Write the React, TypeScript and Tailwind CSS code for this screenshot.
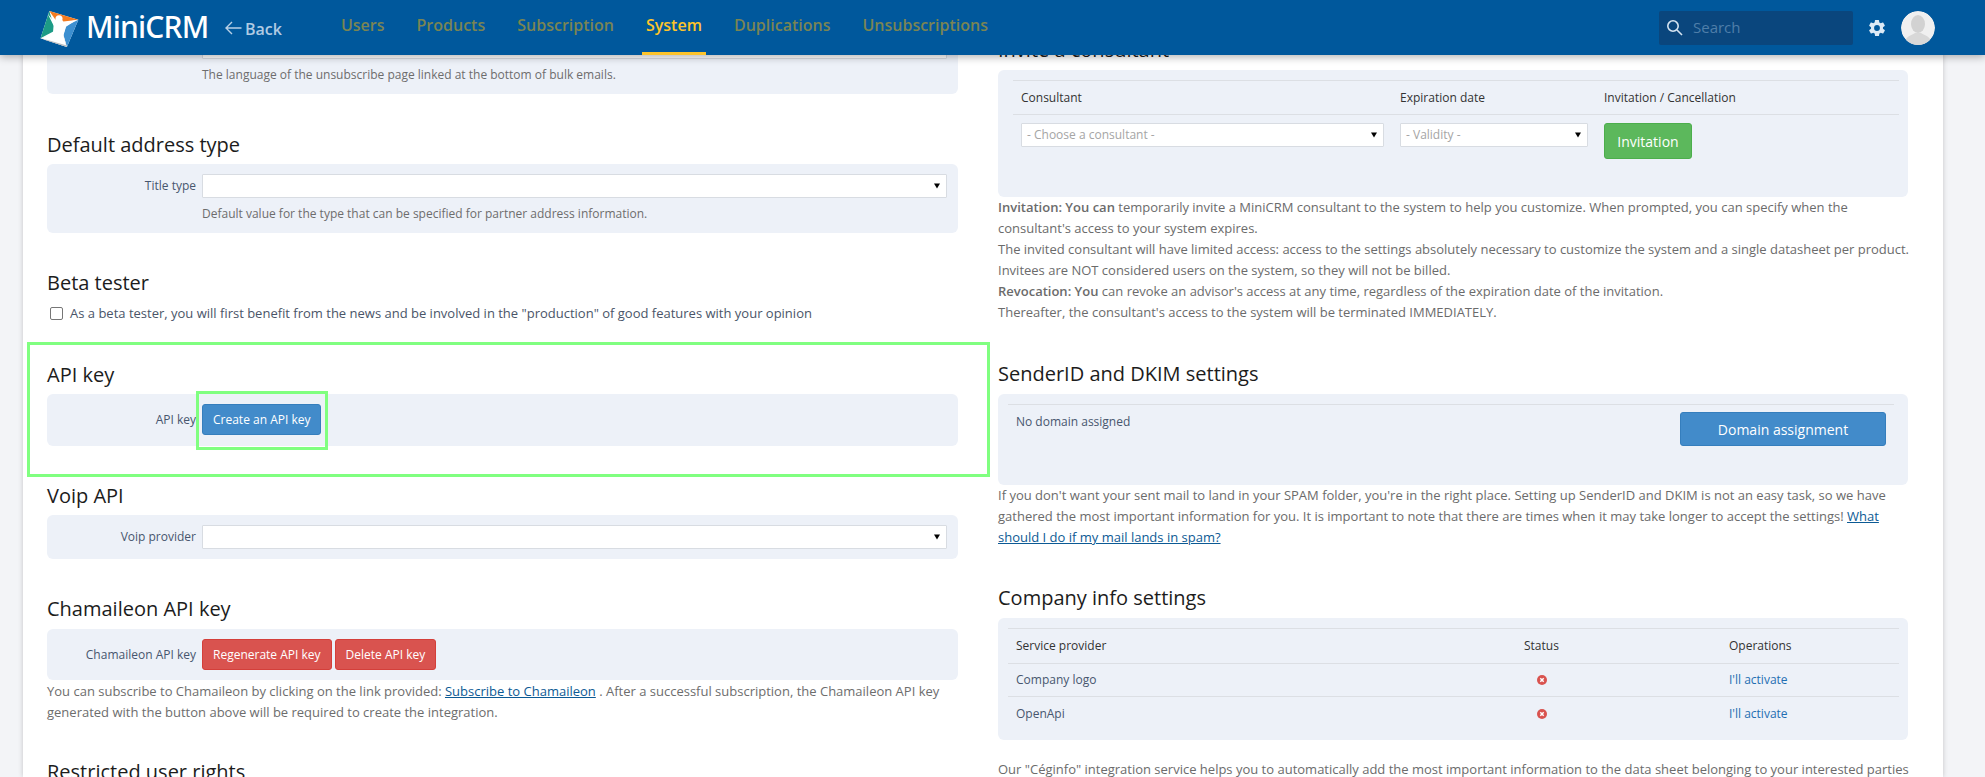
import React from "react";

function Logo() {
  return (
    <svg width="44" height="43" viewBox="0 0 50 46" className="shrink-0">
      <polygon points="14,3 47,13 34,44 4,34" fill="#ffffff" />
      <polygon points="14,3 47,13 30,15 25,9 21,13" fill="#f47b20" />
      <polygon points="47,13 34,44 30,30 33,20" fill="#3c8fd0" />
      <polygon points="14,3 4,34 19,26 19,20" fill="#1d9b86" />
      <polygon points="4,34 34,44 30,31 18,30" fill="#d4d6d8" />
      <polygon points="9,36 34,44 30,34 22,30" fill="#b9bcbf" />
      <circle cx="25" cy="12" r="4" fill="#ffffff" />
      <path d="M12 6 L21 17 L30 17 L45 13 L33 21 L30 31 L33 42 L5 34 L18 29 L19 20 Z" fill="#ffffff" />
    </svg>
  );
}

function Caret() {
  return <span className="absolute right-[6px] top-1/2 -translate-y-1/2 w-0 h-0 border-x-[3.5px] border-x-transparent border-t-[5px] border-t-black" />;
}

function Select({ text, className = "" }: { text?: string; className?: string }) {
  return (
    <div className={"relative h-6 bg-white border border-[#d8dce2] rounded-[1px] pl-[5px] text-[12px] leading-[22px] text-[#a5a5a5] " + className}>
      {text}
      <Caret />
    </div>
  );
}

function Heading({ children }: { children: React.ReactNode }) {
  return <h2 className="h-7 text-[20px] leading-7 text-[#1c1c1c] font-normal whitespace-nowrap">{children}</h2>;
}

function Row({ label, children }: { label?: string; children: React.ReactNode }) {
  return (
    <div className="flex items-center">
      <div className="w-[155px] pr-[6px] text-right text-[12px] text-[#47566e] leading-[18px] whitespace-nowrap">{label}</div>
      <div className="flex-1 flex gap-[3px]">{children}</div>
    </div>
  );
}

function Help({ children }: { children: React.ReactNode }) {
  return <p className="ml-[155px] mt-[5px] text-[12px] leading-[21px] text-[#6d6d6d]">{children}</p>;
}

function Btn({ color, children }: { color: "blue" | "red"; children: React.ReactNode }) {
  return (
    <button
      className={
        "h-[31px] rounded-[3px] text-white text-[12px] border whitespace-nowrap " +
        (color === "blue" ? "bg-[#428bca] border-[#357ebd] px-[10px]" : "bg-[#d9534f] border-[#d43f3a] px-[10px]")
      }
    >
      {children}
    </button>
  );
}

function Panel({ className = "", children }: { className?: string; children: React.ReactNode }) {
  return <div className={"bg-[#edf1f8] rounded-[6px] " + className}>{children}</div>;
}

const Text = ({ children, className = "" }: { children: React.ReactNode; className?: string }) => (
  <p className={"text-[13px] leading-[21px] text-[#6b6b6b] " + className}>{children}</p>
);

const A = ({ children }: { children: React.ReactNode }) => (
  <a className="text-[#0c5a94] underline">{children}</a>
);

const tabs = ["Users", "Products", "Subscription", "System", "Duplications", "Unsubscriptions"];

export default function App() {
  return (
    <div className="relative h-[777px] w-[1985px] overflow-hidden bg-[#f3f4f7] font-['Open_Sans',sans-serif]">
      <header className="absolute inset-x-0 top-0 z-20 h-[55px] bg-[#00589c] shadow-[0_2px_8px_rgba(0,0,0,0.3)] flex items-center">
        <div className="ml-[37px] mt-[2px]">
          <Logo />
        </div>
        <span className="ml-[5px] -mt-[2px] text-[30px] leading-none text-white font-medium font-['Noto_Sans',sans-serif] tracking-[-0.8px] w-[120px]">MiniCRM</span>
        <svg width="17" height="14" viewBox="0 0 17 14" fill="none" stroke="#b8d0e6" strokeWidth="1.4" className="ml-[19px] mt-[1px]">
          <path d="M16.5 7H1M7 1 1 7l6 6" />
        </svg>
        <span className="ml-[3px] mt-[2px] text-[16px] font-semibold text-[#b0cbe3]">Back</span>
        <nav className="ml-[59px] flex h-full gap-[32px] w-[680px]">
          {tabs.map((t) => (
            <div key={t} className="relative h-full flex items-center pb-[5px]">
              <span className={"text-[16px] font-semibold whitespace-nowrap " + (t === "System" ? "text-[#fdc42b]" : "text-[#7a8553]")}>{t}</span>
              {t === "System" && <span className="absolute -inset-x-[4px] bottom-0 h-[3px] bg-[#fdc42b]" />}
            </div>
          ))}
        </nav>
        <div className="ml-auto flex items-center">
          <div className="h-[34px] w-[194px] bg-[#0a467d] rounded-[2px] flex items-center pl-[7px]">
            <svg width="17" height="17" viewBox="0 0 17 17" fill="none" stroke="#d5e4f1" strokeWidth="1.6">
              <circle cx="7" cy="7" r="5.2" />
              <path d="M11 11l5 5" />
            </svg>
            <span className="ml-[10px] -mt-[1px] text-[15px] text-[#4f7ea9]">Search</span>
          </div>
          <svg width="20" height="20" viewBox="0 0 24 24" fill="#ddeaf5" className="ml-[14px]">
            <path d="M19.14 12.94a7.5 7.5 0 0 0 0-1.88l2.03-1.58a.5.5 0 0 0 .12-.64l-1.92-3.32a.5.5 0 0 0-.6-.22l-2.39.96a7 7 0 0 0-1.63-.94l-.36-2.54a.5.5 0 0 0-.5-.42h-3.84a.5.5 0 0 0-.49.42l-.36 2.54a7.4 7.4 0 0 0-1.63.94l-2.39-.96a.5.5 0 0 0-.6.22L2.71 8.84a.5.5 0 0 0 .12.64l2.03 1.58a7.5 7.5 0 0 0 0 1.88l-2.03 1.58a.5.5 0 0 0-.12.64l1.92 3.32c.12.22.38.3.6.22l2.39-.96c.5.38 1.05.7 1.63.94l.36 2.54c.05.24.25.42.49.42h3.84c.24 0 .45-.18.49-.42l.36-2.54a7.4 7.4 0 0 0 1.63-.94l2.39.96c.22.08.48 0 .6-.22l1.92-3.32a.5.5 0 0 0-.12-.64zM12 15.5a3.5 3.5 0 1 1 0-7 3.5 3.5 0 0 1 0 7z" />
          </svg>
          <svg width="34" height="34" viewBox="0 0 34 34" className="ml-[14px] mr-[50px] rounded-full">
            <circle cx="17" cy="17" r="17" fill="#f0f0f0" />
            <ellipse cx="17" cy="13" rx="7" ry="9" fill="#d2d2d2" />
            <path d="M4 31c1-6 7-7 10-9h6c3 2 9 3 10 9a17 17 0 0 1-26 0z" fill="#d8d8d8" />
          </svg>
        </div>
      </header>

      <main className="absolute left-[23px] top-0 h-[777px] w-[1920px] bg-white shadow-[0_0_5px_rgba(0,0,0,0.2)] flex gap-[40px] pl-[24px] overflow-hidden">
        <div className="w-[911px] shrink-0 pt-[25px]">
          <Panel className="pt-[10px] pr-[11px] pb-[9px]">
            <Row>
              <Select className="flex-1" />
            </Row>
            <Help>The language of the unsubscribe page linked at the bottom of bulk emails.</Help>
          </Panel>

          <div className="mt-[37px] mb-[5px]">
            <Heading>Default address type</Heading>
          </div>
          <Panel className="pt-[10px] pr-[11px] pb-[9px]">
            <Row label="Title type">
              <Select className="flex-1" />
            </Row>
            <Help>Default value for the type that can be specified for partner address information.</Help>
          </Panel>

          <div className="mt-[36px]">
            <Heading>Beta tester</Heading>
          </div>
          <label className="mt-[7px] h-5 flex items-center text-[13px] text-[#4a5568] whitespace-nowrap">
            <span className="ml-[3px] mr-[7px] w-[13px] h-[13px] border border-[#767676] rounded-[2px] bg-white -mt-[1px]" />
            As a beta tester, you will first benefit from the news and be involved in the "production" of good features with your opinion
          </label>

          <div className="relative mt-[37px]">
            <div className="absolute left-[-20px] top-[-19px] w-[963px] h-[135px] border-[3px] border-[#80ff80] pointer-events-none z-10" />
            <div className="absolute left-[149px] top-[30px] w-[132px] h-[59px] border-[3px] border-[#80ff80] pointer-events-none z-10" />
            <div className="mb-[5px]">
              <Heading>API key</Heading>
            </div>
            <Panel className="pt-[10px] pb-[11px]">
              <Row label="API key">
                <Btn color="blue">Create an API key</Btn>
              </Row>
            </Panel>
          </div>

          <div className="mt-[36px] mb-[5px]">
            <Heading>Voip API</Heading>
          </div>
          <Panel className="pt-[10px] pr-[11px] pb-[10px]">
            <Row label="Voip provider">
              <Select className="flex-1" />
            </Row>
          </Panel>

          <div className="mt-[36px] mb-[6px]">
            <Heading>Chamaileon API key</Heading>
          </div>
          <Panel className="py-[10px]">
            <Row label="Chamaileon API key">
              <Btn color="red">Regenerate API key</Btn>
              <Btn color="red">Delete API key</Btn>
            </Row>
          </Panel>
          <p className="mt-px text-[13px] leading-[21px] text-[#6d6d6d]">
            You can subscribe to Chamaileon by clicking on the link provided: <A>Subscribe to Chamaileon</A> . After a successful subscription, the Chamaileon API key generated with the button above will be required to create the integration.
          </p>

          <div className="mt-[35px]">
            <Heading>Restricted user rights</Heading>
          </div>
        </div>

        <div className="w-[910px] shrink-0 pt-[36px]">
          <div className="mb-[6px]">
            <Heading>Invite a consultant</Heading>
          </div>
          <Panel className="h-[127px] pt-[10px] pl-[15px] pr-[9px]">
            <div className="border-t border-[#dcdfe4]">
              <div className="h-[34px] flex items-center border-b border-[#dcdfe4] text-[12px] text-[#333]">
                <span className="w-[387px] pl-[8px]">Consultant</span>
                <span className="w-[204px]">Expiration date</span>
                <span>Invitation / Cancellation</span>
              </div>
              <div className="mt-[8px] flex items-start pl-[8px]">
                <Select text="- Choose a consultant -" className="w-[363px]" />
                <Select text="- Validity -" className="ml-[16px] w-[188px]" />
                <button className="ml-[16px] h-9 w-[88px] rounded-[3px] bg-[#5cb85c] border border-[#4cae4c] text-white text-[14px]">Invitation</button>
              </div>
            </div>
          </Panel>
          <Text>
            <b className="font-semibold">Invitation: You can</b> temporarily invite a MiniCRM consultant to the system to help you customize. When prompted, you can specify when the consultant's access to your system expires.
            <br />
            <span className="whitespace-nowrap">The invited consultant will have limited access: access to the settings absolutely necessary to customize the system and a single datasheet per product.</span>
            <br />
            Invitees are NOT considered users on the system, so they will not be billed.
            <br />
            <b className="font-semibold">Revocation: You</b> can revoke an advisor's access at any time, regardless of the expiration date of the invitation.
            <br />
            Thereafter, the consultant's access to the system will be terminated IMMEDIATELY.
          </Text>

          <div className="mt-[37px] mb-[6px]">
            <Heading>SenderID and DKIM settings</Heading>
          </div>
          <Panel className="h-[91px] pt-[10px] pl-[10px] pr-[14px]">
            <div className="border-t border-[#dcdfe4] pl-[8px] pr-[8px] flex justify-between text-[12px] text-[#47566e]">
              <span className="mt-[8px]">No domain assigned</span>
              <button className="mt-[7px] h-[34px] w-[206px] rounded-[3px] bg-[#428bca] border border-[#357ebd] text-white text-[14px]">Domain assignment</button>
            </div>
          </Panel>
          <Text>
            If you don't want your sent mail to land in your SPAM folder, you're in the right place. Setting up SenderID and DKIM is not an easy task, so we have gathered the most important information for you. It is important to note that there are times when it may take longer to accept the settings! <A>What should I do if my mail lands in spam?</A>
          </Text>

          <div className="mt-[36px] mb-[6px]">
            <Heading>Company info settings</Heading>
          </div>
          <Panel className="h-[122px] pt-[10px] pl-[10px] pr-[9px]">
            <div className="border-t border-[#dcdfe4] text-[12px]">
              <div className="h-[35px] flex items-center border-b border-[#dcdfe4] text-[#333]">
                <span className="w-[516px] pl-[8px]">Service provider</span>
                <span className="w-[205px]">Status</span>
                <span>Operations</span>
              </div>
              {["Company logo", "OpenApi"].map((n, i) => (
                <div key={n} className={"h-[33px] flex items-center text-[#47566e] " + (i === 0 ? "border-b border-[#dcdfe4]" : "")}>
                  <span className="w-[516px] pl-[8px]">{n}</span>
                  <span className="w-[205px] pl-[13px]">
                    <svg width="10" height="10" viewBox="0 0 10 10">
                      <circle cx="5" cy="5" r="5" fill="#d9534f" />
                      <path d="M3.3 3.3l3.4 3.4M6.7 3.3 3.3 6.7" stroke="#fff" strokeWidth="1.5" />
                    </svg>
                  </span>
                  <span className="text-[#1f6fb2]">I'll activate</span>
                </div>
              ))}
            </div>
          </Panel>
          <Text className="mt-[19px] whitespace-nowrap">
            Our "Céginfo" integration service helps you to automatically add the most important information to the data sheet belonging to your interested parties
          </Text>
        </div>
      </main>
    </div>
  );
}
